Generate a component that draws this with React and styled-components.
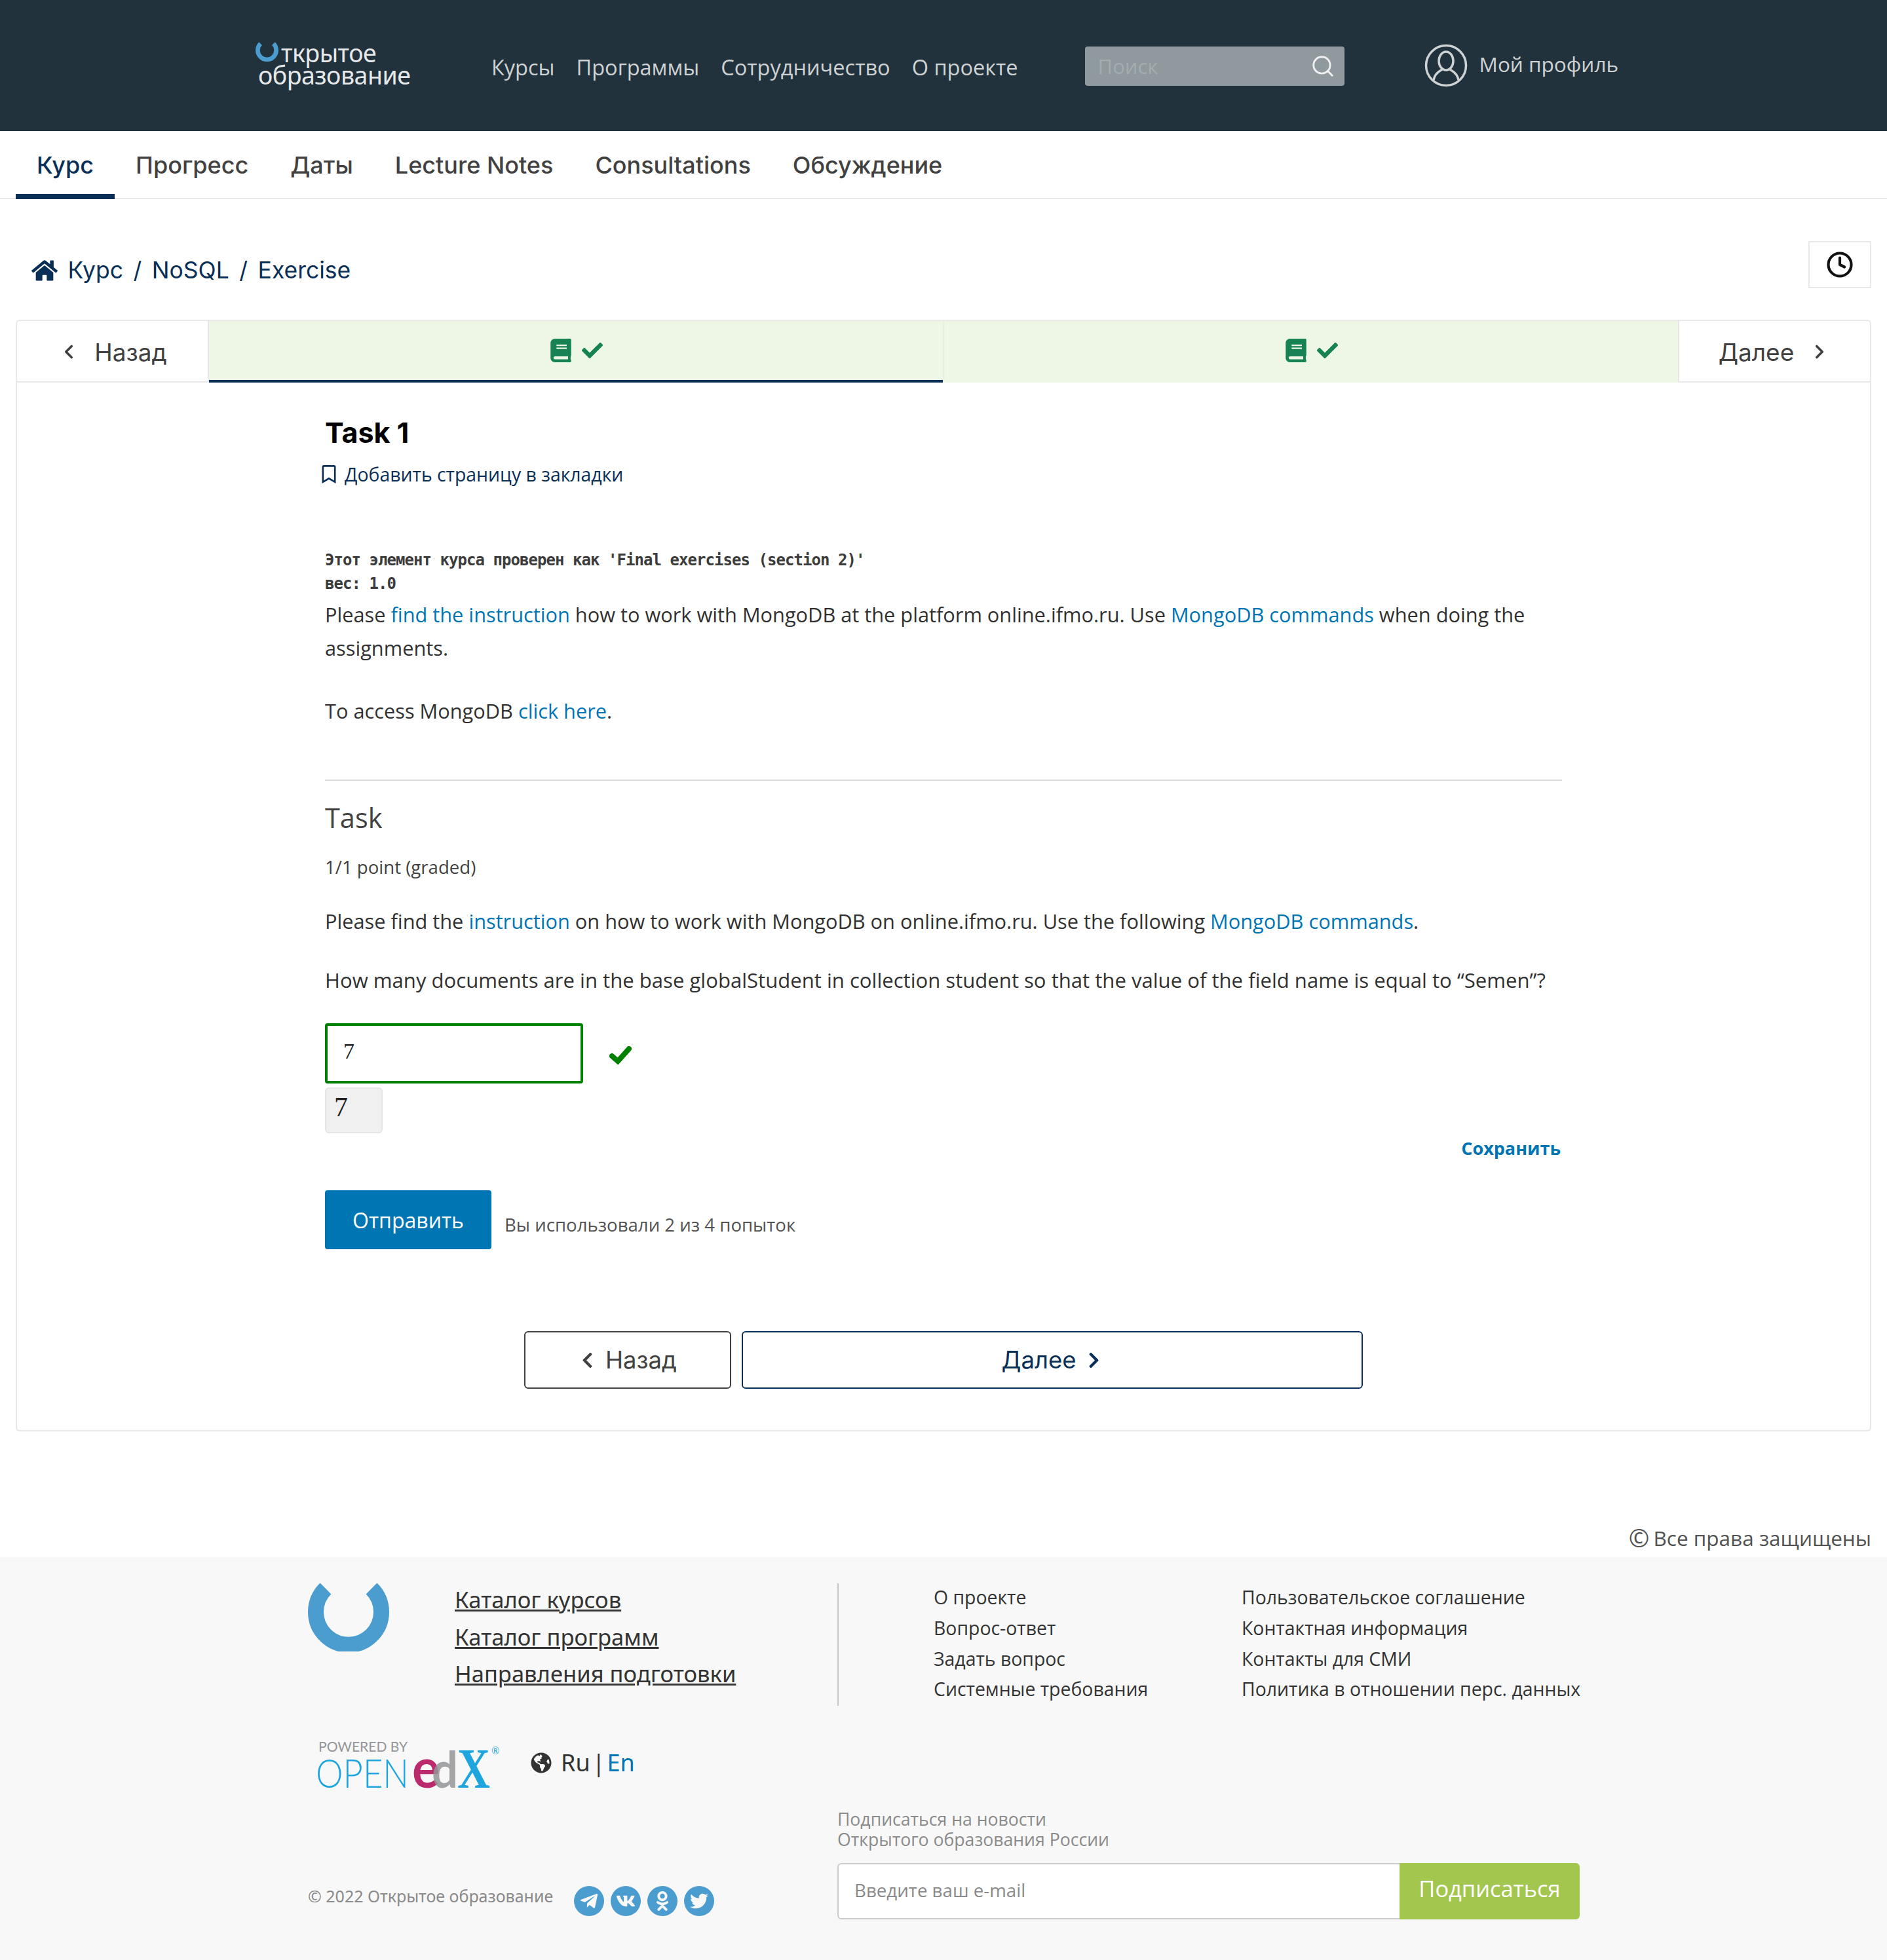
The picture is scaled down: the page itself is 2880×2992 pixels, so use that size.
import styled, { createGlobalStyle } from "styled-components";
import { FaHome, FaBook, FaCheck, FaChevronLeft, FaChevronRight, FaRegBookmark, FaGlobeAmericas, FaTelegramPlane, FaVk, FaOdnoklassniki, FaTwitter } from "react-icons/fa";
import { Search, Clock, ChevronLeft, ChevronRight } from "lucide-react";

const Global = createGlobalStyle`
  html, body { margin: 0; padding: 0; background: #fff; }
  body { font-family: "Open Sans", "Noto Sans", sans-serif; color: #414141; }
  * { box-sizing: border-box; }
`;

const Ring = ({ width, height }) => (
  <svg width={width} height={height} viewBox="0 0 124 104">
    <path d="M27 8 A50 50 0 1 0 97 8" fill="none" stroke="#4b9ccf" strokeWidth="24" />
  </svg>
);

const UserIcon = () => (
  <svg width="66" height="66" viewBox="0 0 66 66" fill="none" stroke="#cfd2d3" strokeWidth="3.5">
    <circle cx="33" cy="33" r="30.5" />
    <ellipse cx="33" cy="26" rx="11" ry="14" />
    <path d="M14 55 C16 44 24 41 27 39 M52 55 C50 44 42 41 39 39" />
  </svg>
);

const BoldCheck = () => (
  <svg width="34" height="28" viewBox="0 0 34 28" fill="none" stroke="#008000" strokeWidth="8" strokeLinecap="round">
    <path d="M4 15 L13 23 L30 4" />
  </svg>
);

const App = () => {
  return (
    <>
      <Global />
      <Header>
        <Logo>
          <LogoTop>
            <Ring width={35} height={30} />
            <span>ткрытое</span>
          </LogoTop>
          <LogoBottom>образование</LogoBottom>
        </Logo>
        <TopNav>
          <a>Курсы</a>
          <a>Программы</a>
          <a>Сотрудничество</a>
          <a>О проекте</a>
        </TopNav>
        <SearchBox>
          <span>Поиск</span>
          <Search size={38} color="#f0f0f0" strokeWidth={1.8} />
        </SearchBox>
        <Profile>
          <UserIcon />
          <span>Мой профиль</span>
        </Profile>
      </Header>

      <Tabs>
        <Tab $active>Курс</Tab>
        <Tab>Прогресс</Tab>
        <Tab>Даты</Tab>
        <Tab>Lecture Notes</Tab>
        <Tab>Consultations</Tab>
        <Tab>Обсуждение</Tab>
      </Tabs>

      <Main>
        <CrumbRow>
          <Crumbs>
            <FaHome size={40} />
            <span>Курс</span>
            <i>/</i>
            <span>NoSQL</span>
            <i>/</i>
            <span>Exercise</span>
          </Crumbs>
          <ClockButton>
            <Clock size={42} color="#111" strokeWidth={2.4} />
          </ClockButton>
        </CrumbRow>

        <Card>
          <UnitNav>
            <UnitLink>
              <ChevronLeft size={34} strokeWidth={2.6} />
              <span>Назад</span>
            </UnitLink>
            <UnitTab $active>
              <FaBook size={36} />
              <FaCheck size={32} />
            </UnitTab>
            <UnitTab>
              <FaBook size={36} />
              <FaCheck size={32} />
            </UnitTab>
            <UnitLink $right>
              <span>Далее</span>
              <ChevronRight size={34} strokeWidth={2.6} />
            </UnitLink>
          </UnitNav>

          <Content>
            <Title>Task 1</Title>
            <Bookmark>
              <FaRegBookmark size={28} />
              <span>Добавить страницу в закладки</span>
            </Bookmark>
            <GradeNote>
              Этот элемент курса проверен как 'Final exercises (section 2)'
              <br />
              вес: 1.0
            </GradeNote>
            <Para>
              Please <a>find the instruction</a> how to work with MongoDB at the platform online.ifmo.ru. Use <a>MongoDB commands</a> when doing the assignments.
            </Para>
            <Para $top={45}>
              To access MongoDB <a>click here</a>.
            </Para>
            <Rule />
            <ProblemTitle>Task</ProblemTitle>
            <Points>1/1 point (graded)</Points>
            <Para $top={38}>
              Please find the <a>instruction</a> on how to work with MongoDB on online.ifmo.ru. Use the following <a>MongoDB commands</a>.
            </Para>
            <Para $top={39} $size={31.1}>
              How many documents are in the base globalStudent in collection student so that the value of the field name is equal to “Semen”?
            </Para>
            <AnswerRow>
              <AnswerInput>7</AnswerInput>
              <BoldCheck />
            </AnswerRow>
            <Preview>7</Preview>
            <SaveLink>Сохранить</SaveLink>
            <SubmitRow>
              <SubmitButton>Отправить</SubmitButton>
              <Attempts>Вы использовали 2 из 4 попыток</Attempts>
            </SubmitRow>
            <BottomNav>
              <PageButton $width={316} $color="#414141">
                <FaChevronLeft size={27} />
                Назад
              </PageButton>
              <PageButton $width={948} $color="#0a2f57">
                Далее
                <FaChevronRight size={27} />
              </PageButton>
            </BottomNav>
          </Content>
        </Card>

        <Rights>
          <b>©</b>
          <span>Все права защищены</span>
        </Rights>
      </Main>

      <Footer>
        <FooterLeft>
          <FooterTop>
            <Ring width={124} height={104} />
            <MainLinks>
              <a>Каталог курсов</a>
              <a>Каталог программ</a>
              <a>Направления подготовки</a>
            </MainLinks>
          </FooterTop>
          <PoweredRow>
            <svg width="290" height="96" viewBox="0 0 290 96">
              <text x="4" y="20" fontFamily="Lato" fontSize="21" letterSpacing="1" fill="#939598" textLength="137">POWERED BY</text>
              <text x="0" y="75" fontFamily="Lato" fontWeight="300" fontSize="62" fill="#1ea5de" textLength="142" lengthAdjust="spacingAndGlyphs">OPEN</text>
              <text x="147" y="75" fontFamily="Lato" fontWeight="700" fontSize="85" fill="#bb2a6d" textLength="42" lengthAdjust="spacingAndGlyphs">e</text>
              <text x="177" y="75" fontFamily="Lato" fontWeight="700" fontSize="77" fill="#939598" fillOpacity="0.85" textLength="40" lengthAdjust="spacingAndGlyphs">d</text>
              <text x="216" y="75" fontFamily="Liberation Serif" fontWeight="700" fontSize="86" fill="#1ea5de" textLength="50" lengthAdjust="spacingAndGlyphs">X</text>
              <text x="268" y="24" fontFamily="Lato" fontSize="15" fill="#1ea5de">®</text>
            </svg>
            <Lang>
              <FaGlobeAmericas size={32} color="#333" />
              <span>Ru</span>
              <b>|</b>
              <a>En</a>
            </Lang>
          </PoweredRow>
          <SocialRow>
            <CopyText>© 2022 Открытое образование</CopyText>
            <Socials>
              <SocialDot><FaTelegramPlane size={30} /></SocialDot>
              <SocialDot><FaVk size={30} /></SocialDot>
              <SocialDot><FaOdnoklassniki size={30} /></SocialDot>
              <SocialDot><FaTwitter size={28} /></SocialDot>
            </Socials>
          </SocialRow>
        </FooterLeft>
        <FooterRight>
          <InfoLinks>
            <a>О проекте</a>
            <a>Пользовательское соглашение</a>
            <a>Вопрос-ответ</a>
            <a>Контактная информация</a>
            <a>Задать вопрос</a>
            <a>Контакты для СМИ</a>
            <a>Системные требования</a>
            <a>Политика в отношении перс. данных</a>
          </InfoLinks>
          <SubscribeText>
            Подписаться на новости
            <br />
            Открытого образования России
          </SubscribeText>
          <SubscribeForm>
            <EmailBox>Введите ваш e-mail</EmailBox>
            <SubscribeButton>Подписаться</SubscribeButton>
          </SubscribeForm>
        </FooterRight>
      </Footer>
    </>
  );
};

const Header = styled.header`
  display: flex;
  align-items: center;
  height: 200px;
  padding-left: 390px;
  background-color: #21323d;
`;

const Logo = styled.div`
  width: 360px;
  margin-bottom: 4px;
  color: #e6e8e9;
  font-family: "Noto Sans", sans-serif;
  font-size: 37.5px;
  line-height: 34px;
  letter-spacing: -0.5px;
`;

const LogoTop = styled.div`
  display: flex;
  align-items: flex-start;
  gap: 4px;
`;

const LogoBottom = styled.div`
  margin-left: 4px;
`;

const TopNav = styled.nav`
  display: flex;
  gap: 33px;
  margin-top: 4px;
  color: #cfd2d3;
  font-size: 32.5px;
`;

const SearchBox = styled.div`
  display: flex;
  align-items: center;
  justify-content: space-between;
  width: 396px;
  height: 60px;
  margin: 2px 0 0 102px;
  padding: 0 14px 0 20px;
  background-color: #8f999e;
  border-radius: 4px;
  color: #a3acb0;
  font-size: 31px;
`;

const Profile = styled.div`
  display: flex;
  align-items: center;
  gap: 18px;
  margin-left: 122px;
  color: #cfd2d3;
  font-size: 31.5px;
  span { margin-bottom: 6px; }
`;

const Tabs = styled.div`
  display: flex;
  height: 104px;
  padding-left: 24px;
  border-bottom: 2px solid #e8e8e8;
`;

const Tab = styled.a`
  display: flex;
  align-items: center;
  height: 104px;
  padding: 8px 32px 0;
  font-family: Inter, sans-serif;
  font-size: 36px;
  font-weight: 500;
  color: ${(p) => (p.$active ? "#0a2f57" : "#414141")};
  border-bottom: 8px solid ${(p) => (p.$active ? "#0a2f57" : "transparent")};
`;

const Main = styled.main`
  padding: 0 24px;
`;

const CrumbRow = styled.div`
  display: flex;
  justify-content: space-between;
  align-items: flex-start;
  height: 184px;
  padding-top: 64px;
`;

const Crumbs = styled.div`
  display: flex;
  align-items: center;
  gap: 15.5px;
  margin: 20px 0 0 24px;
  color: #0a2f57;
  font-family: Inter, sans-serif;
  font-size: 35.5px;
  line-height: 50px;
  i { font-style: normal; }
`;

const ClockButton = styled.div`
  display: flex;
  align-items: center;
  justify-content: center;
  width: 96px;
  height: 72px;
  border: 2px solid #e8e8e8;
`;

const Card = styled.section`
  border: 2px solid #e8e8e8;
  border-radius: 6px;
  padding-bottom: 63px;
`;

const UnitNav = styled.div`
  display: flex;
  height: 94px;
`;

const UnitLink = styled.a`
  display: flex;
  align-items: center;
  justify-content: center;
  gap: 22px;
  flex: none;
  width: 293px;
  padding-top: 2px;
  font-family: Inter, sans-serif;
  font-size: 37px;
  color: #414141;
  border-bottom: 2px solid #e8e8e8;
  border-right: ${(p) => (p.$right ? "none" : "2px solid #e8e8e8")};
  border-left: ${(p) => (p.$right ? "2px solid #e8e8e8" : "none")};
`;

const UnitTab = styled.a`
  display: flex;
  align-items: center;
  justify-content: center;
  gap: 14px;
  flex: 1;
  background-color: #eef6e6;
  color: #178253;
  border-bottom: 4px solid ${(p) => (p.$active ? "#0a2f57" : "#eef6e6")};
  & + & { border-left: 2px solid #e8efe0; }
`;

const Content = styled.div`
  width: 1888px;
  margin-left: 470px;
`;

const Title = styled.h1`
  margin: 46px 0 0;
  color: #000;
  font-family: Inter, sans-serif;
  font-size: 43px;
  font-weight: 700;
  line-height: 60px;
`;

const Bookmark = styled.a`
  display: flex;
  align-items: center;
  gap: 10px;
  height: 40px;
  margin: 14px 0 0 -8px;
  color: #0a2f57;
  font-size: 28.4px;
`;

const GradeNote = styled.div`
  margin-top: 93px;
  color: #3c3c3c;
  font-family: "DejaVu Sans Mono", monospace;
  font-size: 24px;
  font-weight: 700;
  letter-spacing: -0.95px;
  line-height: 36px;
`;

const Para = styled.p`
  margin: ${(p) => p.$top || 4}px 0 0;
  color: #313131;
  font-size: ${(p) => p.$size || 30.75}px;
  line-height: 51px;
  a { color: #0075b4; }
`;

const Rule = styled.hr`
  margin: 79px 0 0;
  height: 2px;
  border: none;
  background-color: #dcdcdc;
`;

const ProblemTitle = styled.h3`
  margin: 26px 0 0;
  color: #414141;
  font-size: 41.5px;
  font-weight: 400;
  line-height: 60px;
`;

const Points = styled.div`
  margin-top: 25px;
  color: #414141;
  font-size: 27.6px;
  line-height: 40px;
`;

const AnswerRow = styled.div`
  display: flex;
  align-items: center;
  gap: 40px;
  margin-top: 40px;
  svg { margin-top: 6px; }
`;

const AnswerInput = styled.div`
  width: 394px;
  height: 92px;
  padding: 20px 24px;
  border: 4px solid #008000;
  border-radius: 4px;
  color: #222;
  font-family: "Liberation Serif", serif;
  font-size: 34px;
  line-height: 38px;
`;

const Preview = styled.div`
  width: 88px;
  height: 70px;
  margin-top: 6px;
  padding: 6px 12px;
  background-color: #f0f0f0;
  border: 2px solid #e6e6e6;
  border-radius: 6px;
  color: #222;
  font-family: "Liberation Serif", serif;
  font-size: 42px;
  line-height: 44px;
`;

const SaveLink = styled.a`
  display: block;
  margin-top: 3px;
  padding-right: 2px;
  text-align: right;
  color: #0075b4;
  font-size: 27px;
  font-weight: 700;
  line-height: 40px;
`;

const SubmitRow = styled.div`
  display: flex;
  align-items: flex-end;
  gap: 20px;
  margin-top: 44px;
`;

const SubmitButton = styled.button`
  width: 254px;
  height: 90px;
  border: none;
  border-radius: 4px;
  background-color: #0075b4;
  color: #fff;
  font-family: "Open Sans", sans-serif;
  font-size: 32px;
`;

const Attempts = styled.span`
  margin-bottom: 18px;
  color: #525252;
  font-size: 27.6px;
  line-height: 40px;
`;

const BottomNav = styled.div`
  display: flex;
  gap: 16px;
  margin: 125px 0 0 304px;
`;

const PageButton = styled.a`
  display: flex;
  align-items: center;
  justify-content: center;
  gap: 14px;
  width: ${(p) => p.$width}px;
  height: 88px;
  border: 2px solid ${(p) => p.$color};
  border-radius: 6px;
  color: ${(p) => p.$color};
  font-family: Inter, sans-serif;
  font-size: 36.5px;
`;

const Rights = styled.div`
  display: flex;
  align-items: center;
  justify-content: flex-end;
  gap: 6px;
  height: 60px;
  margin-top: 132px;
  color: #525252;
  font-size: 31.5px;
  b { font-size: 38px; font-weight: 400; }
`;

const Footer = styled.footer`
  display: grid;
  grid-template-columns: 808px 1fr;
  height: 616px;
  padding: 40px 0 0 470px;
  background-color: #f8f8f8;
`;

const FooterLeft = styled.div`
  display: flex;
  flex-direction: column;
`;

const FooterTop = styled.div`
  display: flex;
  gap: 100px;
  height: 187px;
`;

const MainLinks = styled.div`
  display: flex;
  flex-direction: column;
  margin-top: -3px;
  font-family: "Noto Sans", sans-serif;
  font-size: 34.6px;
  line-height: 56.5px;
  color: #333;
  a { text-decoration: underline; }
`;

const PoweredRow = styled.div`
  display: flex;
  align-items: flex-start;
  height: 82px;
  margin: 50px 0 0 12px;
  gap: 38px;
`;

const Lang = styled.div`
  display: flex;
  align-items: center;
  gap: 3px;
  margin-top: 12px;
  color: #333;
  font-family: "Noto Sans", sans-serif;
  font-size: 36px;
  svg { margin-right: 11px; }
  b { font-weight: 400; }
  a { color: #0075b4; }
`;

const SocialRow = styled.div`
  display: flex;
  align-items: flex-start;
  gap: 32px;
  margin-top: 143px;
`;

const CopyText = styled.span`
  color: #8a8a8a;
  font-family: "Noto Sans", sans-serif;
  font-size: 25px;
  line-height: 30px;
`;

const Socials = styled.div`
  display: flex;
  gap: 10px;
`;

const SocialDot = styled.a`
  display: flex;
  align-items: center;
  justify-content: center;
  width: 46px;
  height: 46px;
  border-radius: 50%;
  background-color: #4b9ccf;
  color: #f8f8f8;
`;

const FooterRight = styled.div`
  display: flex;
  flex-direction: column;
`;

const InfoLinks = styled.div`
  display: grid;
  grid-template-columns: 470px 1fr;
  height: 187px;
  padding-left: 145px;
  border-left: 2px solid #c8c8c8;
  color: #333;
  font-size: 28.4px;
  line-height: 46.7px;
  a { margin-top: -2px; }
`;

const SubscribeText = styled.div`
  margin-top: 158px;
  color: #8a8a8a;
  font-size: 26.6px;
  line-height: 31px;
`;

const SubscribeForm = styled.div`
  display: flex;
  width: 1133px;
  height: 86px;
  margin-top: 20px;
`;

const EmailBox = styled.div`
  flex: 1;
  padding: 0 24px;
  background-color: #fff;
  border: 2px solid #ccc;
  border-right: none;
  border-radius: 6px 0 0 6px;
  color: #8a8a8a;
  font-size: 27.7px;
  line-height: 78px;
`;

const SubscribeButton = styled.div`
  width: 275px;
  background-color: #a3c74e;
  border-radius: 0 6px 6px 0;
  color: #fff;
  font-size: 34.4px;
  line-height: 78px;
  text-align: center;
`;

export default App;
